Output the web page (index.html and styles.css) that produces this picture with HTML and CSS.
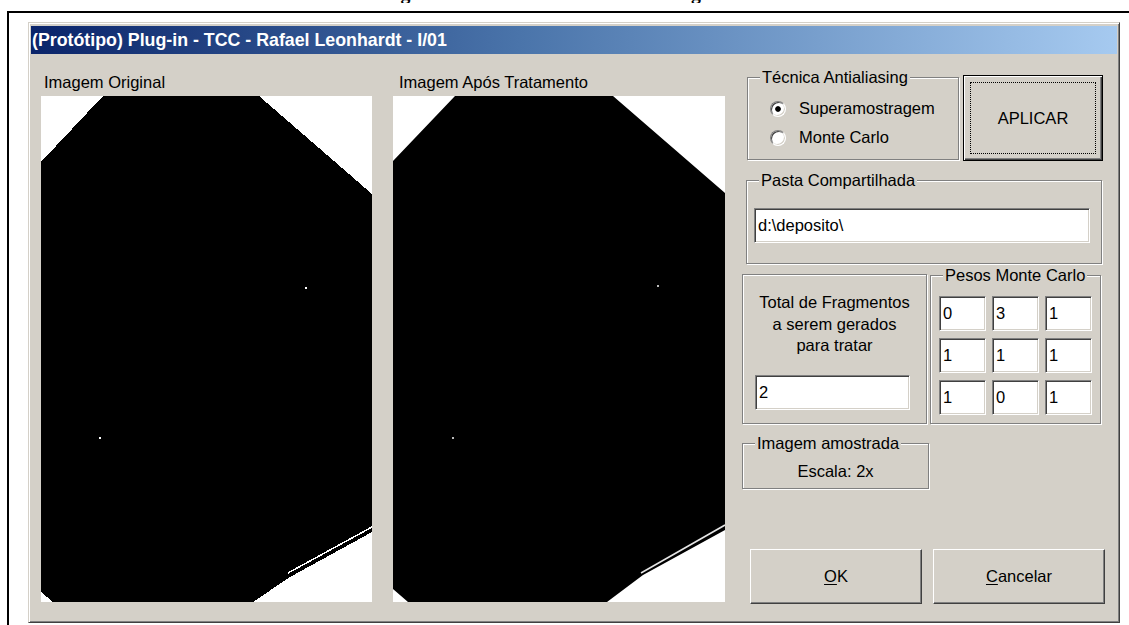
FILE: index.html
```html
<!DOCTYPE html>
<html lang="pt-BR">
<head>
<meta charset="utf-8">
<title>(Protótipo) Plug-in - TCC</title>
<link rel="stylesheet" href="styles.css">
</head>
<body>
<div class="caption-strip"><p class="caption">Figura 31 – Tela de resultado da imagem</p></div>
<div class="frame">
  <div class="window">
    <div class="titlebar">(Protótipo) Plug-in - TCC - Rafael Leonhardt - I/01</div>
    <div class="client">
      <section class="panel">
        <div class="panel-label">Imagem Original</div>
        <svg class="picture" width="331" height="506" viewBox="0 0 331 506" shape-rendering="crispEdges">
          <rect width="331" height="506" fill="#fff"/>
          <polygon points="62,0 218,0 331,98 331,436 249,481 212,506 12,506 0,496 0,66" fill="#000"/>
          <line x1="247" y1="477" x2="331" y2="431" stroke="#fff" stroke-width="1.5"/>
          <rect x="58" y="341" width="2" height="2" fill="#fff"/>
          <rect x="264" y="191" width="2" height="2" fill="#fff"/>
        </svg>
      </section>
      <section class="panel panel-right">
        <div class="panel-label">Imagem Após Tratamento</div>
        <svg class="picture" width="332" height="506" viewBox="0 0 332 506">
          <rect width="332" height="506" fill="#fff"/>
          <polygon points="62,0 220,0 332,97 332,434 250,479 214,506 15,506 0,493 0,65" fill="#000"/>
          <line x1="248" y1="477" x2="332" y2="429" stroke="#e6e6e6" stroke-width="1.6"/>
          <rect x="59" y="341" width="2" height="2" fill="#bbb"/>
          <rect x="264" y="189" width="2" height="2" fill="#bbb"/>
        </svg>
      </section>
      <aside class="controls">
        <div class="row-top">
          <div class="group group-tecnica">
            <span class="legend">Técnica Antialiasing</span>
            <div class="radio"><span class="radio-dot checked"></span>Superamostragem</div>
            <div class="radio"><span class="radio-dot"></span>Monte Carlo</div>
          </div>
          <button class="btn btn-default"><span class="focus">APLICAR</span></button>
        </div>
        <div class="group group-pasta">
          <span class="legend">Pasta Compartilhada</span>
          <div class="field field-wide">d:\deposito\</div>
        </div>
        <div class="row-mid">
          <div class="group group-total">
            <p class="total-text">Total de Fragmentos<br>a serem gerados<br>para tratar</p>
            <div class="field field-total">2</div>
          </div>
          <div class="group group-pesos">
            <span class="legend">Pesos Monte Carlo</span>
            <div class="weights">
              <div class="field">0</div><div class="field">3</div><div class="field">1</div>
              <div class="field">1</div><div class="field">1</div><div class="field">1</div>
              <div class="field">1</div><div class="field">0</div><div class="field">1</div>
            </div>
          </div>
        </div>
        <div class="group group-amostra">
          <span class="legend">Imagem amostrada</span>
          <p class="scale">Escala: 2x</p>
        </div>
        <div class="row-bottom">
          <button class="btn btn-ok"><u>O</u>K</button>
          <button class="btn btn-cancel"><u>C</u>ancelar</button>
        </div>
      </aside>
    </div>
  </div>
</div>
</body>
</html>
```

FILE: styles.css
```css
html, body {
  margin: 0;
  background: #fff;
}

body {
  display: flow-root;
  height: 625px;
  overflow: hidden;
  font-family: "Liberation Sans", Arial, sans-serif;
  font-size: 16.5px;
  color: #000;
}

/* figure caption of the document page; only its lowest pixels fall on screen */
.caption-strip {
  height: 3px;
  overflow: hidden;
}

.caption {
  margin: -18.5px 0 0 383px;
  height: 22px;
  font: bold 19.8px/22px "Liberation Serif", "Times New Roman", serif;
  white-space: nowrap;
}

/* black figure frame around the screenshot */
.frame {
  margin: 8px 0 0 7px;
  width: 1101px;
  height: 603px;
  border-top: 2px solid #000;
  border-left: 2px solid #000;
  padding: 9px 0 0 19px;
}

/* classic dialog window */
.window {
  box-sizing: border-box;
  width: 1092px;
  height: 601px;
  background: #d4d0c8;
  border: 1px solid;
  border-color: #d4d0c8 #404040 #404040 #d4d0c8;
  box-shadow: inset 1px 1px #fff, inset -1px -1px #808080;
  padding: 3px 2px 2px 2px;
  display: flex;
  flex-direction: column;
}

.titlebar {
  height: 28px;
  line-height: 28px;
  padding-left: 1px;
  font-weight: bold;
  font-size: 17.8px;
  color: #fff;
  white-space: nowrap;
  background: linear-gradient(to right, #0a246a 0%, #4a74aa 45%, #a6caf0 100%);
}

.client {
  flex: 1;
  display: flex;
  padding: 18px 0 0 10px;
  min-height: 0;
}

.panel {
  display: flex;
  flex-direction: column;
}

.panel-right {
  margin-left: 21px;
}

.panel-label {
  height: 20px;
  line-height: 20px;
  padding-left: 3px;
  margin-bottom: 4px;
  white-space: nowrap;
}

.panel-right .panel-label {
  padding-left: 6px;
}

.picture {
  display: block;
}

/* right-hand column of controls */
.controls {
  width: 363px;
  margin: -18px 0 0 17px;
  padding: 21px 0 16px 0;
  display: flex;
  flex-direction: column;
}

.group {
  position: relative;
  box-sizing: border-box;
  border: 1px solid #808080;
  box-shadow: inset 1px 1px #fff, 1px 1px #fff;
}

.legend {
  position: absolute;
  top: -11px;
  left: 12px;
  padding: 0 2px;
  line-height: 20px;
  background: #d4d0c8;
  white-space: nowrap;
}

.row-top {
  display: flex;
  align-items: flex-start;
}

.group-tecnica {
  width: 212px;
  height: 83px;
  margin: 2px 0 0 5px;
  padding: 16px 0 0 22px;
}

.radio {
  display: flex;
  align-items: center;
  height: 29px;
  white-space: nowrap;
}

.radio-dot {
  box-sizing: border-box;
  width: 16px;
  height: 16px;
  margin-right: 13px;
  border-radius: 50%;
  border: 1px solid;
  border-color: #808080 #fff #fff #808080;
  box-shadow: inset 1px 1px #404040, inset -1px -1px #d4d0c8;
  background: #fff;
}

.radio-dot.checked {
  background: radial-gradient(circle, #000 0, #000 2.4px, #fff 3.2px);
}

/* push buttons */
.btn {
  box-sizing: border-box;
  font: inherit;
  color: #000;
  background: #d4d0c8;
  border: 1px solid;
  border-color: #fff #404040 #404040 #fff;
  box-shadow: inset -1px -1px #808080, inset 1px 1px #d4d0c8;
  padding: 0;
  margin: 0;
}

.btn u {
  text-decoration-thickness: 1px;
  text-underline-offset: 2px;
}

.btn-default {
  width: 140px;
  height: 86px;
  margin-left: 4px;
  border: 1px solid #000;
  box-shadow: inset 1px 1px #fff, inset -1px -1px #404040, inset -2px -2px #808080;
  padding: 6px;
  display: flex;
}

.focus {
  flex: 1;
  display: flex;
  align-items: center;
  justify-content: center;
  border: 1px dotted #000;
}

.group-pasta {
  width: 356px;
  height: 84px;
  margin: 19px 0 0 4px;
  padding: 27px 0 0 7px;
}

/* sunken edit boxes */
.field {
  box-sizing: border-box;
  height: 35px;
  line-height: 33px;
  padding-left: 3px;
  background: #fff;
  border: 1px solid;
  border-color: #808080 #fff #fff #808080;
  box-shadow: inset 1px 1px #404040, inset -1px -1px #d4d0c8;
  white-space: nowrap;
}

.field-wide {
  width: 336px;
}

.row-mid {
  display: flex;
  align-items: flex-start;
  margin-top: 10px;
}

.group-total {
  width: 185px;
  height: 150px;
  padding: 17px 0 0 12px;
}

.total-text {
  margin: 0 0 0 -12px;
  text-align: center;
  line-height: 21.5px;
}

.field-total {
  width: 155px;
  margin-top: 18px;
}

.group-pesos {
  width: 171px;
  height: 149px;
  margin: 1px 0 0 3px;
  padding: 20px 0 0 8px;
}

.weights {
  display: grid;
  grid-template-columns: repeat(3, 47px);
  grid-auto-rows: 35px;
  column-gap: 6px;
  row-gap: 7px;
}

.group-amostra {
  width: 187px;
  height: 46px;
  margin-top: 19px;
  padding-top: 17px;
}

.scale {
  margin: 0;
  line-height: 20px;
  text-align: center;
}

.row-bottom {
  display: flex;
  margin-top: auto;
  padding-left: 8px;
  gap: 11px;
}

.btn-ok,
.btn-cancel {
  width: 172px;
  height: 55px;
}
```
